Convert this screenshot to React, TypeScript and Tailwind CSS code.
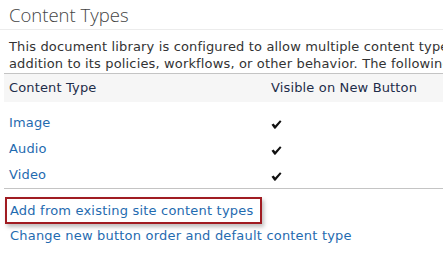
import React from "react";

const Check = () => (
  <svg width="11" height="9" viewBox="0 0 11 9" className="block">
    <path d="M0.5 4.8 L2.6 3.6 L4.2 5.6 L9 0.3 L10.5 1.4 L4.4 8.7 L3.4 8.7 Z" fill="#111" />
  </svg>
);

export default function App() {
  const rows = ["Image", "Audio", "Video"];
  return (
    <div
      className="w-[443px] h-[259px] bg-white overflow-hidden relative"
      style={{ fontFamily: '"DejaVu Sans", Verdana, sans-serif' }}
    >
      <div className="h-[30px] border-b border-[#ececec] pl-[9px] pt-[3px]">
        <div
          className="text-[18.5px] leading-[24px] text-[#444] font-light whitespace-nowrap"
          style={{ fontFamily: '"Open Sans", "Segoe UI", sans-serif' }}
        >
          Content Types
        </div>
      </div>
      <div className="pl-[9px] pt-[8px] text-[13px] tracking-[0.15px] leading-[17px] text-[#333] whitespace-nowrap">
        <div>This document library is configured to allow multiple content types.</div>
        <div>addition to its policies, workflows, or other behavior. The following</div>
      </div>
      <div className="mt-[1px] ml-[4px] border-t border-[#c4c4c4] bg-[#f6f6f6] h-[29px] flex items-center text-[13px] tracking-[0.15px] text-[#1e2d4a] whitespace-nowrap">
        <div className="w-[267px] pl-[5px]">Content Type</div>
        <div>Visible on New Button</div>
      </div>
      <div className="ml-[4px] pt-[8px]">
        {rows.map((r) => (
          <div key={r} className="h-[26px] flex items-center text-[13px] tracking-[0.15px] text-[#1f6bb0]">
            <div className="w-[267px] pl-[5px]">{r}</div>
            <div className="pt-[2px]">
              <Check />
            </div>
          </div>
        ))}
      </div>
      <div className="ml-[4px] border-t border-[#c4c4c4]" />
      <div className="pl-[5px] pt-[8px] text-[13px] tracking-[0.2px] text-[#1f6bb0] whitespace-nowrap">
        <div className="w-[257px] h-[27px] border-2 border-[#a01c22] flex items-center pl-[3px] shadow-[2px_3px_4px_rgba(0,0,0,0.25)]">
          Add from existing site content types
        </div>
        <div className="pl-[5px] h-[22px] flex items-center mt-[1px]">
          Change new button order and default content type
        </div>
      </div>
    </div>
  );
}
